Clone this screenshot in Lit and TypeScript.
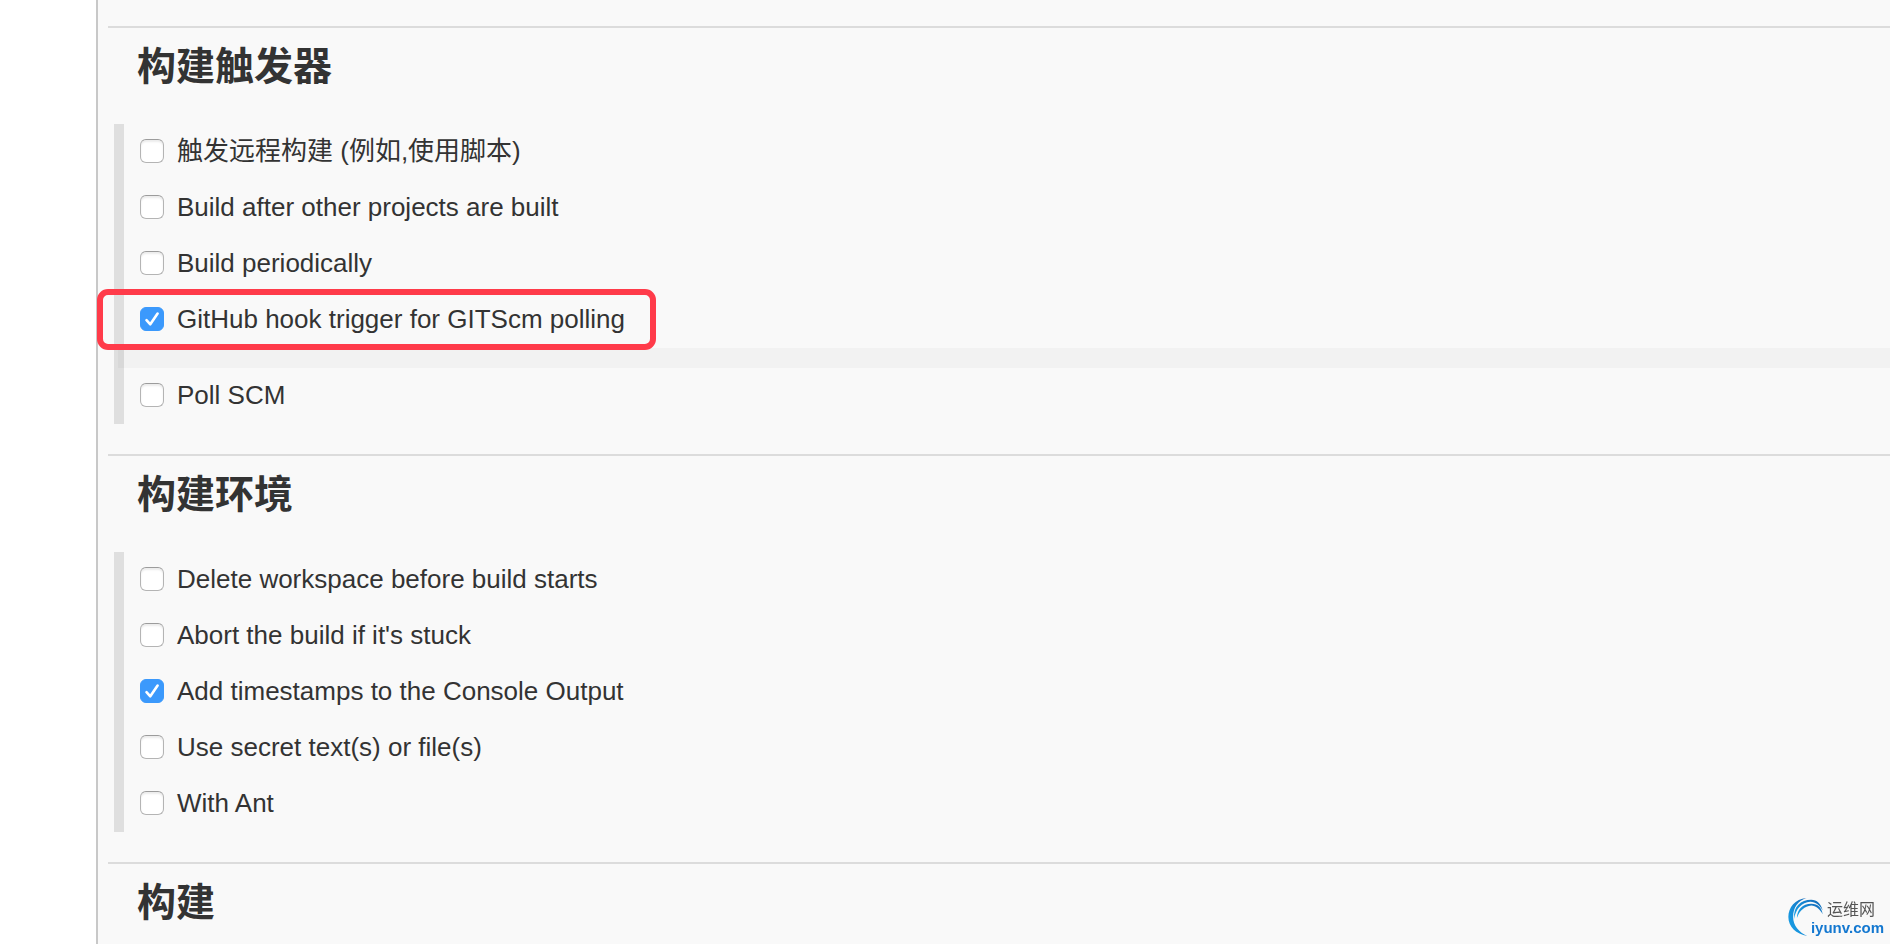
import { LitElement, html, css, nothing } from "lit";
import { customElement, property } from "lit/decorators.js";
import { classMap } from "lit/directives/class-map.js";

interface Option {
  id: string;
  label: string;
  checked?: boolean;
  highlighted?: boolean;
  expanded?: boolean;
}

interface Section {
  title: string;
  options: Option[];
}

const SECTIONS: Section[] = [
  {
    title: "构建触发器",
    options: [
      { id: "remote", label: "触发远程构建 (例如,使用脚本)" },
      { id: "after-projects", label: "Build after other projects are built" },
      { id: "periodic", label: "Build periodically" },
      {
        id: "github-hook",
        label: "GitHub hook trigger for GITScm polling",
        checked: true,
        highlighted: true,
        expanded: true,
      },
      { id: "poll-scm", label: "Poll SCM" },
    ],
  },
  {
    title: "构建环境",
    options: [
      { id: "delete-workspace", label: "Delete workspace before build starts" },
      { id: "abort-stuck", label: "Abort the build if it's stuck" },
      { id: "timestamps", label: "Add timestamps to the Console Output", checked: true },
      { id: "secrets", label: "Use secret text(s) or file(s)" },
      { id: "ant", label: "With Ant" },
    ],
  },
  { title: "构建", options: [] },
];

@customElement("config-section")
export class ConfigSection extends LitElement {
  @property({ attribute: false }) section!: Section;

  static styles = css`
    :host {
      display: block;
      border-top: 2px solid #dcdcdc;
    }
    .title {
      margin: 0;
      padding: 11px 29px 29px;
      font-size: 39px;
      line-height: 56px;
      font-weight: 700;
    }
    .options {
      position: relative;
      margin: 0 0 30px 6px;
      padding: 0;
      border-left: 10px solid #dfdfdf;
      list-style: none;
    }
    .row {
      position: relative;
      display: flex;
      align-items: center;
      gap: 13px;
      height: 56px;
      padding: 0 0 2px 16px;
      box-sizing: border-box;
    }
    .box {
      flex: none;
      appearance: none;
      width: 24px;
      height: 24px;
      margin: 0;
      border: 1px solid #b4b4b4;
      border-top-color: #9c9c9c;
      border-radius: 6px;
      background: #fff;
      box-shadow: inset 0 2px 2px #ececec;
    }
    .box:checked {
      border-color: #3b99fc;
      background: #3b99fc
        url("data:image/svg+xml,%3Csvg xmlns='http://www.w3.org/2000/svg' viewBox='0 0 24 24' fill='none' stroke='white' stroke-width='2.6' stroke-linecap='round' stroke-linejoin='round'%3E%3Cpath d='M6.5 13.2 10.3 17.3 17.6 6.5'/%3E%3C/svg%3E")
        center / 24px 24px no-repeat;
      box-shadow: none;
    }
    .label {
      font-size: 26px;
      line-height: 32px;
    }
    .highlighted::after {
      content: "";
      position: absolute;
      top: -3px;
      left: -27px;
      width: 559px;
      height: 61px;
      box-sizing: border-box;
      border: 6px solid #ff3b4a;
      border-radius: 11px;
      pointer-events: none;
      z-index: 1;
    }
    .detail {
      height: 20px;
      margin-left: -6px;
      background: rgba(0, 0, 0, 0.027);
    }
  `;

  render() {
    const { title, options } = this.section;
    return html`
      <h2 class="title">${title}</h2>
      ${options.length
        ? html`<ul class="options">
            ${options.map(
              (o) => html`<li>
                <div class=${classMap({ row: true, highlighted: !!o.highlighted })}>
                  <input class="box" type="checkbox" id=${o.id} ?checked=${!!o.checked} />
                  <label class="label" for=${o.id}>${o.label}</label>
                </div>
                ${o.expanded ? html`<div class="detail"></div>` : nothing}
              </li>`
            )}
          </ul>`
        : nothing}
    `;
  }
}

@customElement("app-root")
export class AppRoot extends LitElement {
  static styles = css`
    :host {
      display: block;
      height: 100vh;
      overflow: hidden;
      background: #fff;
      color: #333;
      font-family: "Liberation Sans", "Noto Sans CJK SC", sans-serif;
    }
    .panel {
      min-height: 100vh;
      margin-left: 96px;
      padding: 26px 0 0 10px;
      box-sizing: border-box;
      border-left: 2px solid #c8c8c8;
      background: #f9f9f9;
    }
    .watermark {
      position: fixed;
      right: 6px;
      bottom: 7px;
      display: flex;
      align-items: flex-end;
    }
    .swirl {
      width: 37px;
      height: 40px;
      margin-right: -13px;
    }
    .brand {
      display: flex;
      flex-direction: column;
      font-size: 16px;
      line-height: 18px;
    }
    .name {
      padding-left: 16px;
      color: #555;
    }
    .domain {
      color: #1478d0;
      font-size: 15px;
      font-weight: 700;
    }
  `;

  render() {
    return html`
      <main class="panel">
        ${SECTIONS.map((s) => html`<config-section .section=${s}></config-section>`)}
      </main>
      <div class="watermark">
        <svg class="swirl" viewBox="0 0 38 42" aria-hidden="true">
          <defs>
            <linearGradient id="blue" x1="0" y1="1" x2="1" y2="0">
              <stop offset="0" stop-color="#1aa5ea" />
              <stop offset="0.5" stop-color="#168bd6" />
              <stop offset="1" stop-color="#1465b4" />
            </linearGradient>
          </defs>
          <path fill="url(#blue)" d="M20 1C8 2 1 11 1 21c0 10 8 18 20 20C12 37 6 30 6 21 6 11 11 4 20 1Z" />
          <path fill="url(#blue)" d="M25 3C14 3 6 10 7 23 9 12 15 6 24 5c6 0 10 4 13 9C35 7 31 3 25 3Z" />
          <path fill="url(#blue)" d="M25 7C16 7 10 13 10 22c3-8 8-12 15-13 5 0 9 4 12 9-1-7-5-11-12-11Z" />
        </svg>
        <div class="brand">
          <span class="name">运维网</span>
          <span class="domain">iyunv.com</span>
        </div>
      </div>
    `;
  }
}
